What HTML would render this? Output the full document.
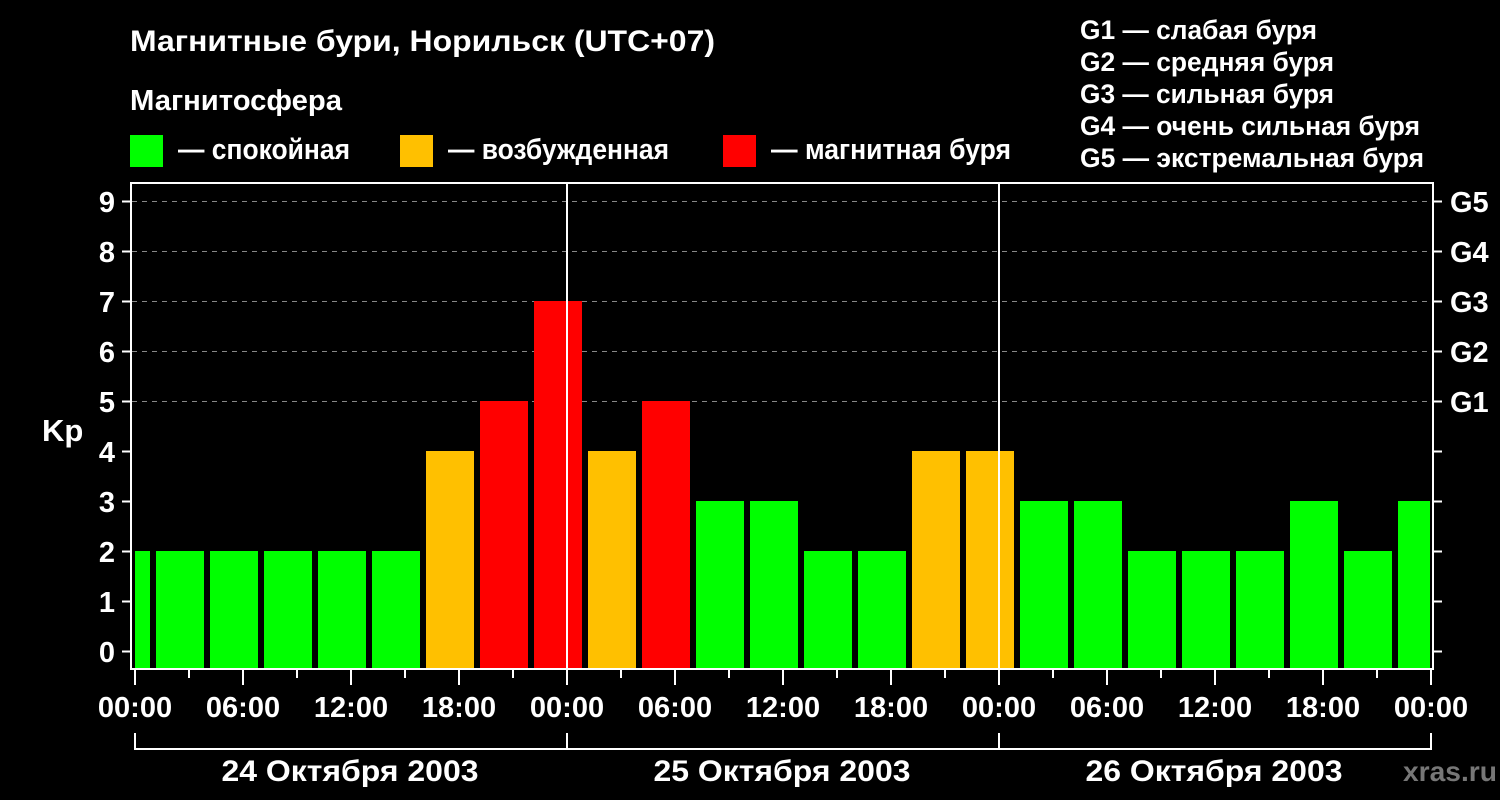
<!DOCTYPE html>
<html><head><meta charset="utf-8"><style>
html,body{margin:0;padding:0;background:#000;}
svg{display:block;}
text{font-family:"Liberation Sans",sans-serif;font-weight:bold;fill:#fff;}
</style></head><body>
<svg width="1500" height="800" viewBox="0 0 1500 800" xmlns="http://www.w3.org/2000/svg">
<rect width="1500" height="800" fill="#000"/>
<text x="130" y="51" font-size="30" textLength="585" lengthAdjust="spacingAndGlyphs">Магнитные бури, Норильск (UTC+07)</text>
<text x="130" y="110" font-size="29" textLength="212" lengthAdjust="spacingAndGlyphs">Магнитосфера</text>
<rect x="130" y="135" width="33" height="32" fill="#00ff00"/>
<text x="178" y="159" font-size="29" textLength="172" lengthAdjust="spacingAndGlyphs">— спокойная</text>
<rect x="400" y="135" width="33" height="32" fill="#ffc000"/>
<text x="448" y="159" font-size="29" textLength="221" lengthAdjust="spacingAndGlyphs">— возбужденная</text>
<rect x="723" y="135" width="33" height="32" fill="#ff0000"/>
<text x="771" y="159" font-size="29" textLength="240" lengthAdjust="spacingAndGlyphs">— магнитная буря</text>
<g font-size="27">
<text x="1080" y="39" textLength="237" lengthAdjust="spacingAndGlyphs">G1 — слабая буря</text>
<text x="1080" y="71" textLength="254" lengthAdjust="spacingAndGlyphs">G2 — средняя буря</text>
<text x="1080" y="103" textLength="254" lengthAdjust="spacingAndGlyphs">G3 — сильная буря</text>
<text x="1080" y="135" textLength="340" lengthAdjust="spacingAndGlyphs">G4 — очень сильная буря</text>
<text x="1080" y="167" textLength="344" lengthAdjust="spacingAndGlyphs">G5 — экстремальная буря</text>
</g>
<g stroke="#888" stroke-width="1" stroke-dasharray="5,5">
<line x1="132" y1="201.5" x2="1432" y2="201.5"/>
<line x1="132" y1="251.5" x2="1432" y2="251.5"/>
<line x1="132" y1="301.5" x2="1432" y2="301.5"/>
<line x1="132" y1="351.5" x2="1432" y2="351.5"/>
<line x1="132" y1="401.5" x2="1432" y2="401.5"/>
</g>
<g>
<rect x="135" y="551" width="15" height="118" fill="#00ff00"/>
<rect x="156" y="551" width="48" height="118" fill="#00ff00"/>
<rect x="210" y="551" width="48" height="118" fill="#00ff00"/>
<rect x="264" y="551" width="48" height="118" fill="#00ff00"/>
<rect x="318" y="551" width="48" height="118" fill="#00ff00"/>
<rect x="372" y="551" width="48" height="118" fill="#00ff00"/>
<rect x="426" y="451" width="48" height="218" fill="#ffc000"/>
<rect x="480" y="401" width="48" height="268" fill="#ff0000"/>
<rect x="534" y="301" width="48" height="368" fill="#ff0000"/>
<rect x="588" y="451" width="48" height="218" fill="#ffc000"/>
<rect x="642" y="401" width="48" height="268" fill="#ff0000"/>
<rect x="696" y="501" width="48" height="168" fill="#00ff00"/>
<rect x="750" y="501" width="48" height="168" fill="#00ff00"/>
<rect x="804" y="551" width="48" height="118" fill="#00ff00"/>
<rect x="858" y="551" width="48" height="118" fill="#00ff00"/>
<rect x="912" y="451" width="48" height="218" fill="#ffc000"/>
<rect x="966" y="451" width="48" height="218" fill="#ffc000"/>
<rect x="1020" y="501" width="48" height="168" fill="#00ff00"/>
<rect x="1074" y="501" width="48" height="168" fill="#00ff00"/>
<rect x="1128" y="551" width="48" height="118" fill="#00ff00"/>
<rect x="1182" y="551" width="48" height="118" fill="#00ff00"/>
<rect x="1236" y="551" width="48" height="118" fill="#00ff00"/>
<rect x="1290" y="501" width="48" height="168" fill="#00ff00"/>
<rect x="1344" y="551" width="48" height="118" fill="#00ff00"/>
<rect x="1398" y="501" width="32" height="168" fill="#00ff00"/>
</g>
<line x1="567" y1="183" x2="567" y2="669" stroke="#fff" stroke-width="2"/>
<line x1="999" y1="183" x2="999" y2="669" stroke="#fff" stroke-width="2"/>
<rect x="131" y="183" width="1302" height="486" fill="none" stroke="#fff" stroke-width="2"/>
<g stroke="#fff" stroke-width="2">
<line x1="122" y1="201.5" x2="131" y2="201.5"/><line x1="122" y1="251.5" x2="131" y2="251.5"/>
<line x1="122" y1="301.5" x2="131" y2="301.5"/><line x1="122" y1="351.5" x2="131" y2="351.5"/>
<line x1="122" y1="401.5" x2="131" y2="401.5"/><line x1="122" y1="451.5" x2="131" y2="451.5"/>
<line x1="122" y1="501.5" x2="131" y2="501.5"/><line x1="122" y1="551.5" x2="131" y2="551.5"/>
<line x1="122" y1="601.5" x2="131" y2="601.5"/><line x1="122" y1="651.5" x2="131" y2="651.5"/>
<line x1="1433" y1="201.5" x2="1442" y2="201.5"/><line x1="1433" y1="251.5" x2="1442" y2="251.5"/>
<line x1="1433" y1="301.5" x2="1442" y2="301.5"/><line x1="1433" y1="351.5" x2="1442" y2="351.5"/>
<line x1="1433" y1="401.5" x2="1442" y2="401.5"/><line x1="1433" y1="451.5" x2="1442" y2="451.5"/>
<line x1="1433" y1="501.5" x2="1442" y2="501.5"/><line x1="1433" y1="551.5" x2="1442" y2="551.5"/>
<line x1="1433" y1="601.5" x2="1442" y2="601.5"/><line x1="1433" y1="651.5" x2="1442" y2="651.5"/>
</g>
<g font-size="29" text-anchor="middle">
<text x="107" y="212">9</text><text x="107" y="262">8</text><text x="107" y="312">7</text>
<text x="107" y="362">6</text><text x="107" y="412">5</text><text x="107" y="462">4</text>
<text x="107" y="512">3</text><text x="107" y="562">2</text><text x="107" y="612">1</text>
<text x="107" y="662">0</text>
</g>
<text x="42" y="441" font-size="31">Kp</text>
<g font-size="29">
<text x="1450" y="212">G5</text><text x="1450" y="262">G4</text><text x="1450" y="312">G3</text>
<text x="1450" y="362">G2</text><text x="1450" y="412">G1</text>
</g>
<g stroke="#fff" stroke-width="2">
<line x1="135" y1="669" x2="135" y2="685"/><line x1="189" y1="669" x2="189" y2="678"/>
<line x1="243" y1="669" x2="243" y2="685"/><line x1="297" y1="669" x2="297" y2="678"/>
<line x1="351" y1="669" x2="351" y2="685"/><line x1="405" y1="669" x2="405" y2="678"/>
<line x1="459" y1="669" x2="459" y2="685"/><line x1="513" y1="669" x2="513" y2="678"/>
<line x1="567" y1="669" x2="567" y2="685"/><line x1="621" y1="669" x2="621" y2="678"/>
<line x1="675" y1="669" x2="675" y2="685"/><line x1="729" y1="669" x2="729" y2="678"/>
<line x1="783" y1="669" x2="783" y2="685"/><line x1="837" y1="669" x2="837" y2="678"/>
<line x1="891" y1="669" x2="891" y2="685"/><line x1="945" y1="669" x2="945" y2="678"/>
<line x1="999" y1="669" x2="999" y2="685"/><line x1="1053" y1="669" x2="1053" y2="678"/>
<line x1="1107" y1="669" x2="1107" y2="685"/><line x1="1161" y1="669" x2="1161" y2="678"/>
<line x1="1215" y1="669" x2="1215" y2="685"/><line x1="1269" y1="669" x2="1269" y2="678"/>
<line x1="1323" y1="669" x2="1323" y2="685"/><line x1="1377" y1="669" x2="1377" y2="678"/>
<line x1="1431" y1="669" x2="1431" y2="685"/>
<polyline points="135,733 135,749 1431,749 1431,733" fill="none"/>
<line x1="567" y1="733" x2="567" y2="749"/><line x1="999" y1="733" x2="999" y2="749"/>
</g>
<g font-size="29" text-anchor="middle">
<text x="135" y="717">00:00</text><text x="243" y="717">06:00</text><text x="351" y="717">12:00</text>
<text x="459" y="717">18:00</text><text x="567" y="717">00:00</text><text x="675" y="717">06:00</text>
<text x="783" y="717">12:00</text><text x="891" y="717">18:00</text><text x="999" y="717">00:00</text>
<text x="1107" y="717">06:00</text><text x="1215" y="717">12:00</text><text x="1323" y="717">18:00</text>
<text x="1431" y="717">00:00</text>
</g>
<g font-size="30" text-anchor="middle">
<text x="350" y="781" textLength="257" lengthAdjust="spacingAndGlyphs">24 Октября 2003</text>
<text x="782" y="781" textLength="257" lengthAdjust="spacingAndGlyphs">25 Октября 2003</text>
<text x="1214" y="781" textLength="257" lengthAdjust="spacingAndGlyphs">26 Октября 2003</text>
</g>
<text x="1403" y="781" font-size="28" textLength="94" lengthAdjust="spacingAndGlyphs" style="fill:#777">xras.ru</text>
</svg>
</body></html>
